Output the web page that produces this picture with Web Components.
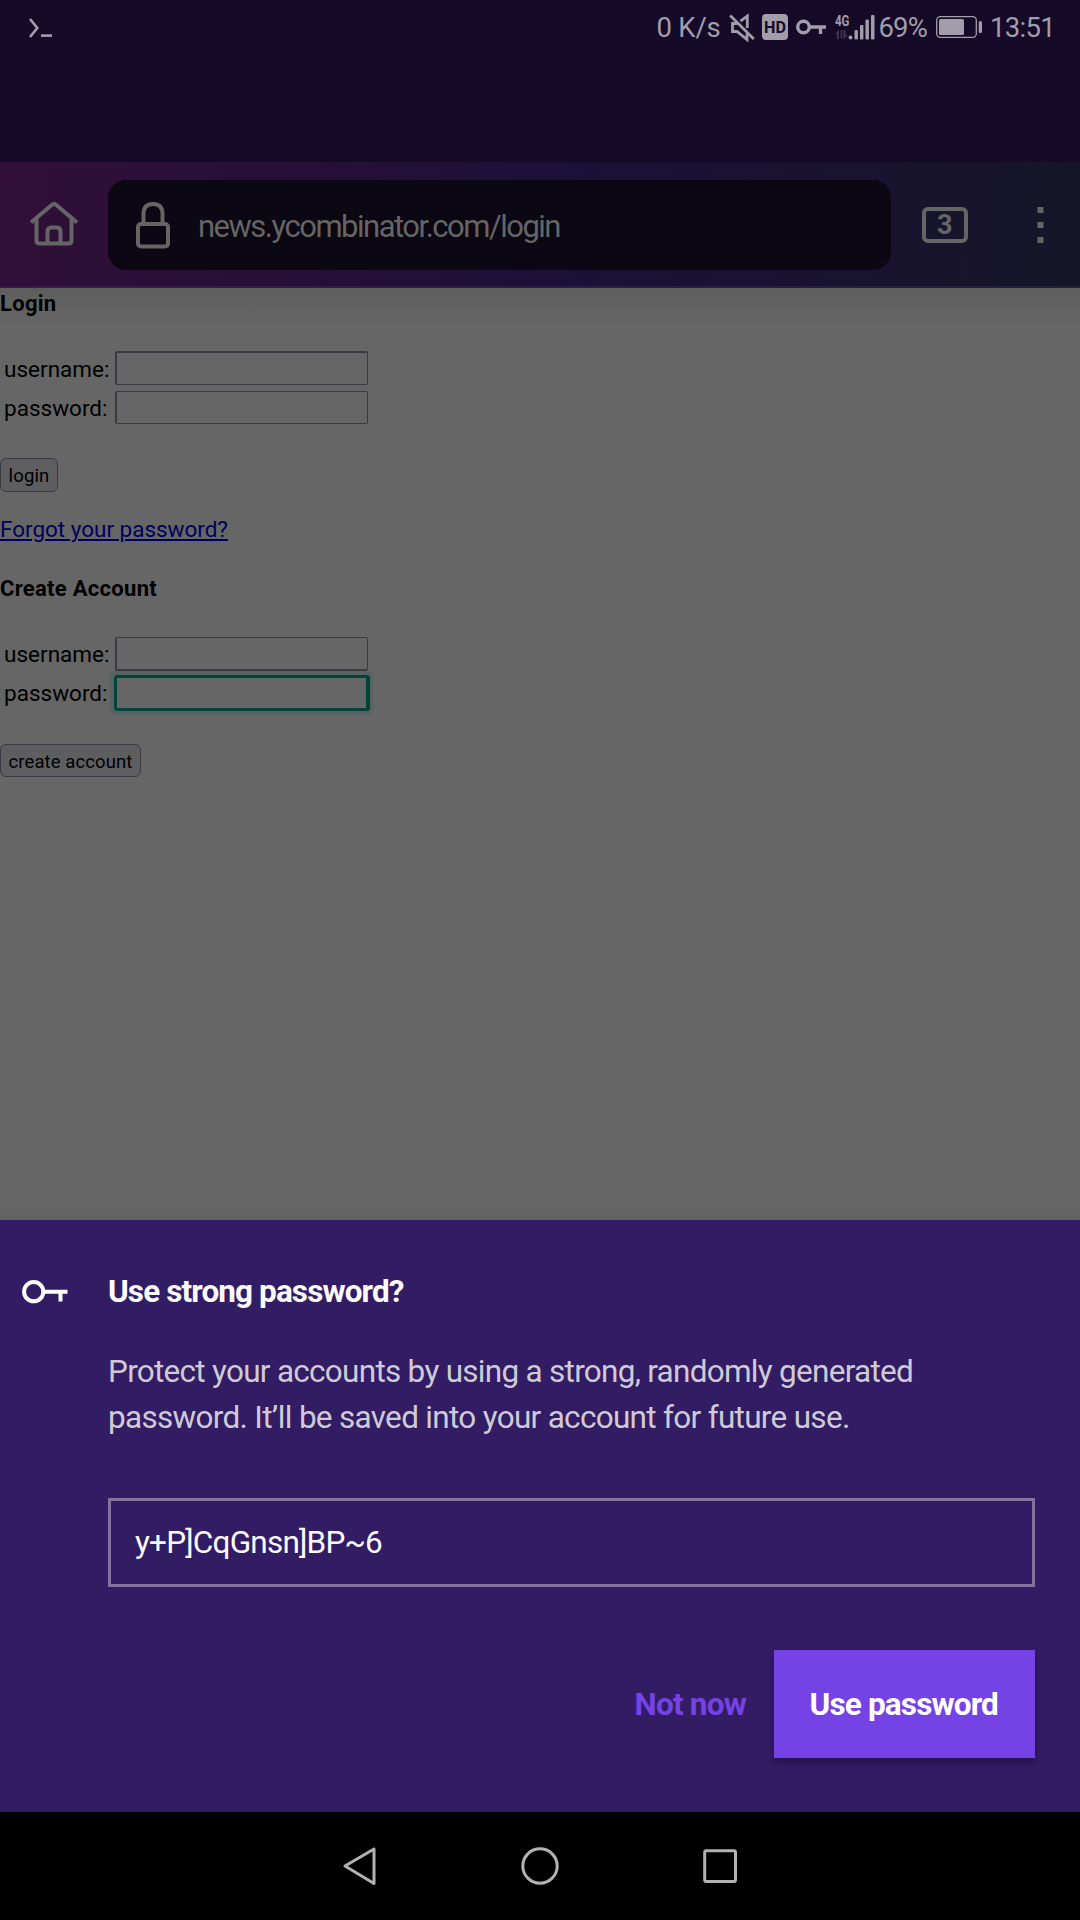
<!DOCTYPE html>
<html lang="en">
<head>
<meta charset="utf-8">
<title>news.ycombinator.com/login</title>
<style>
html,body{margin:0;padding:0;background:#000;font-family:Roboto,"Liberation Sans",sans-serif}
body{width:1080px;height:1920px;overflow:hidden}
</style>
</head>
<body>
<phone-screen></phone-screen>
<script>
const define = (name, html) => {
  const tpl = document.createElement('template');
  tpl.innerHTML = html;
  customElements.define(name, class extends HTMLElement {
    constructor() {
      super();
      this.attachShadow({ mode: 'open' }).appendChild(tpl.content.cloneNode(true));
    }
  });
};

// Single line of text tracked so that it fills the width given in pixels.
customElements.define('fit-text', class extends HTMLElement {
  connectedCallback() {
    if (this.shadowRoot) return;
    this.attachShadow({ mode: 'open' }).innerHTML =
      '<style>:host{display:block;white-space:nowrap;flex:none}span{display:inline-block}:host([underline]) span{text-decoration:underline;text-decoration-thickness:2px;text-underline-offset:2px}</style><span><slot></slot></span>';
    const span = this.shadowRoot.querySelector('span');
    const target = parseFloat(this.getAttribute('width'));
    const n = this.textContent.length;
    const natural = span.getBoundingClientRect().width;
    if (target && natural) this.style.letterSpacing = ((target - natural) / n) + 'px';
  }
});

define('status-bar', `<style>
:host{display:flex;height:162px;background:#150a28;color:#a19dab;font-size:27.500px;line-height:32px;align-items:flex-start;box-sizing:border-box;padding:12px 25px 0 27px}
svg{display:block;flex:none;overflow:visible}
.sp{flex:1}
.net{margin-right:8px}.mute{margin:2px 7px 0 0}.hd{margin:2px 8px 0 0}.key{margin:7px 9px 0 0}.sig{margin:1px 4px 0 0}.bat{margin:4px 7px 0 9px}
</style>
<svg style="margin:5px 0 0 1px" width="26" height="22" viewBox="0 0 26 22" fill="none" stroke="#a19dab" stroke-width="2.600"><path d="M2 2l7.300 9L2 20"/><path d="M13 18.600h11"/></svg>
<div class="sp"></div>
<fit-text class="net" width="64">0 K/s</fit-text>
<svg class="mute" width="26" height="27" viewBox="0 0 26 27" fill="none" stroke="#a19dab" stroke-width="2.800"><path d="M1.200 1.500L24.800 25"/><path d="M8 9.500H3.500v8H8l10 8V19.500M11.500 7.200L18.300 2v12"/></svg>
<svg class="hd" width="26" height="26" viewBox="0 0 26 26"><rect width="26" height="26" rx="4" fill="#a19dab"/><text x="13" y="19" text-anchor="middle" font-family="Roboto" font-weight="700" font-size="17" textLength="22" lengthAdjust="spacingAndGlyphs" fill="#150a28">HD</text></svg>
<svg class="key" width="30" height="17" viewBox="0 0 30 17" fill="none" stroke="#a19dab" stroke-width="3.400"><circle cx="7.500" cy="8" r="5.800"/><path d="M13 8h17M24.500 8v7"/></svg>
<svg class="sig" width="40" height="28" viewBox="0 0 40 28" fill="#a19dab"><text x="0" y="13" font-family="Roboto" font-weight="700" font-size="15" textLength="14.500" lengthAdjust="spacingAndGlyphs">4G</text><g fill="#3c334b"><path d="M0 21l4-4.500V26H1.800v-5zM5.500 17h1.800v8H5.500zM8.300 17h2.200v5H13l-4.700 4.500z"/></g><circle cx="15.500" cy="24.500" r="1.900"/><rect x="19.500" y="17" width="3.400" height="9.500" rx="1"/><rect x="25" y="12" width="3.400" height="14.500" rx="1"/><rect x="30.500" y="6.500" width="3.400" height="20" rx="1"/><rect x="36" y="2" width="3.500" height="24.500" rx="1"/></svg>
<fit-text width="48.500">69%</fit-text>
<svg class="bat" width="47" height="22" viewBox="0 0 47 22"><rect x=".7" y=".7" width="39.600" height="20.600" rx="3.500" fill="none" stroke="#a19dab" stroke-width="1.300"/><rect x="3" y="3" width="25" height="16" rx="1.500" fill="#a19dab"/><rect x="42.700" y="5" width="3.300" height="12" rx="1.500" fill="#a19dab"/></svg>
<fit-text width="65">13:51</fit-text>`);

define('browser-toolbar', `<style>
:host{display:flex;align-items:flex-start;height:126px;box-sizing:border-box;padding:18px 0 0 29px;background:linear-gradient(rgba(255,255,255,0) 124px,rgba(90,70,140,.2) 124px),linear-gradient(92deg,#310f38 0,#280f38 24%,#1b1138 54%,#191331 74%,#161528 100%);color:#656565}
svg{display:block;flex:none}
.url{margin-left:29px;width:783px;height:90px;border-radius:18px;background:#0b0713;display:flex;box-sizing:border-box;padding-left:28px}
.url fit-text{font-size:31px;line-height:93px;height:90px;margin-left:28px}
.tabs{margin:27px 0 0 31px;width:46px;height:36px;box-sizing:border-box;border:4px solid #656565;border-radius:6px;font-weight:700;font-size:27px;line-height:28px;text-align:center;text-indent:-.5px}
</style>
<svg style="margin-top:21px" width="50" height="46" viewBox="0 0 50 46" fill="none" stroke="#656565" stroke-width="4" stroke-linejoin="round" stroke-linecap="butt"><path d="M2 21.500L23 3.800q2-1.800 4 0L48 21.500M7.500 18v21.500q0 3 3 3h29q3 0 3-3V18"/><path d="M18.500 42V30.500q0-4 4-4h5q4 0 4 4V42"/></svg>
<div class="url">
<svg style="margin-top:21px" width="34" height="48" viewBox="0 0 34 48" fill="none" stroke="#656565" stroke-width="4"><rect x="2" y="23" width="30" height="22.500" rx="3"/><path d="M7.500 22V13q0-10 9.500-10t9.500 10v9"/></svg>
<fit-text width="362">news.ycombinator.com/login</fit-text></div>
<div class="tabs">3</div>
<svg style="margin:27px 0 0 68.500px" width="8" height="36" fill="#656565"><path d="M0.500 0h6v6h-6zM0.500 15h6v6h-6zM0.500 30h6v6h-6z"/></svg>`);

define('login-field', `<style>
:host{display:flex;height:33px;color:#000;line-height:34px}
.l{width:110px;padding-left:4px}
.i{box-sizing:border-box;width:253px;height:100%;border:1.500px solid #3a3a40;border-left-width:2px;border-radius:2px;margin-left:1px;background:#666}
:host([first]) .i{border-top-width:2px}
:host([thick]) .i{border-bottom-width:2px}
:host([focus]) .i{border:2px solid #00443a;outline:1px solid #00443a;box-shadow:1px 0 0 1px #00443a,0 0 0 5px #566360;border-radius:2px}
</style><div class="l"><slot></slot></div><div class="i"></div>`);

define('page-button', `<style>
:host{display:block;box-sizing:border-box;border:1.500px solid #3a3a44;border-radius:6px;background:#5e5e61;color:#000;font-size:18.500px;padding-left:7.500px;line-height:34px}
</style><slot></slot>`);

define('login-page', `<style>
:host{display:flex;flex-direction:column;align-items:flex-start;height:932px;box-sizing:border-box;padding-top:3px;background:linear-gradient(#5d5d5d,#626262 14px,#666 42px,#666 916px,#626262 932px);font-size:22.500px;line-height:26px;color:#000}
.b{font-weight:700;font-size:22px}
a{color:#00005e;height:26px}
</style>
<fit-text class="b" width="56.500">Login</fit-text>
<login-field first style="margin-top:34px;height:34px;line-height:36px"><fit-text width="105.500">username:</fit-text></login-field>
<login-field style="margin-top:6px"><fit-text width="103.500">password:</fit-text></login-field>
<page-button style="margin-top:34px;width:58px;height:34px"><fit-text width="41">login</fit-text></page-button>
<a style="margin-top:24px"><fit-text underline width="228">Forgot your password?</fit-text></a>
<fit-text class="b" style="margin-top:34px" width="157">Create Account</fit-text>
<login-field thick style="margin-top:35px;height:34px;line-height:34px"><fit-text width="105.500">username:</fit-text></login-field>
<login-field focus style="margin-top:5px;height:34px"><fit-text width="103.500">password:</fit-text></login-field>
<page-button style="margin-top:34px;width:141px;height:33px"><fit-text width="124">create account</fit-text></page-button>`);

define('password-sheet', `<style>
:host{display:flex;height:592px;box-sizing:border-box;background:#321c64;padding:0 45px 0 22px;font-size:31.500px;line-height:46px;color:#cfcbd6}
svg{display:block;flex:none;margin-top:60px}
.c{flex:1;margin-left:40px;padding-top:49px;display:flex;flex-direction:column}
.t{font-weight:700;color:#fbfafd}
.p{margin-top:34px}
.f{height:89px;box-sizing:border-box;border:3px solid #83749f;margin-top:57px;padding-left:24px;line-height:84px;color:#fbfafd}
.a{display:flex;justify-content:flex-end;margin-top:63px;height:108px;font-weight:700;line-height:110px}
.n{color:#7542e5;margin-right:28px}
.u{width:261px;height:108px;box-sizing:border-box;padding-left:35.500px;background:#7542e5;color:#fff;box-shadow:0 4px 6px rgba(15,5,40,.4)}
</style>
<svg width="46" height="24" viewBox="0 0 46 24" fill="none" stroke="#fff" stroke-width="4"><circle cx="11.700" cy="11.700" r="9.600"/><path d="M22 11.700h23.500M38.500 12v9.500"/></svg>
<div class="c">
<fit-text class="t" width="295.500">Use strong password?</fit-text>
<div class="p"><fit-text width="805">Protect your accounts by using a strong, randomly generated</fit-text><fit-text width="741.500">password. It’ll be saved into your account for future use.</fit-text></div>
<div class="f"><fit-text width="247">y+P]CqGnsn]BP~6</fit-text></div>
<div class="a"><fit-text class="n" width="111.500">Not now</fit-text><div class="u"><fit-text width="188.500">Use password</fit-text></div></div>
</div>`);

define('nav-bar', `<style>
:host{display:flex;justify-content:center;align-items:center;gap:140px;height:108px;background:#000}
svg{display:block}
</style>
<svg width="40" height="40" viewBox="0 0 40 40" fill="none" stroke="#b2b2b2" stroke-width="3" stroke-linejoin="round"><path d="M5 20L34 3v34.500z"/></svg>
<svg width="40" height="40" viewBox="0 0 40 40" fill="none" stroke="#b2b2b2" stroke-width="3"><circle cx="20" cy="20" r="17.200"/></svg>
<svg width="40" height="40" viewBox="0 0 40 40" fill="none" stroke="#b2b2b2" stroke-width="3"><rect x="4.700" y="4.700" width="30.800" height="30.800" rx="1.500"/></svg>`);

define('phone-screen', `<style>:host{display:flex;flex-direction:column;width:1080px;height:1920px}</style>
<status-bar></status-bar><browser-toolbar></browser-toolbar><login-page></login-page><password-sheet></password-sheet><nav-bar></nav-bar>`);
</script>
</body>
</html>
